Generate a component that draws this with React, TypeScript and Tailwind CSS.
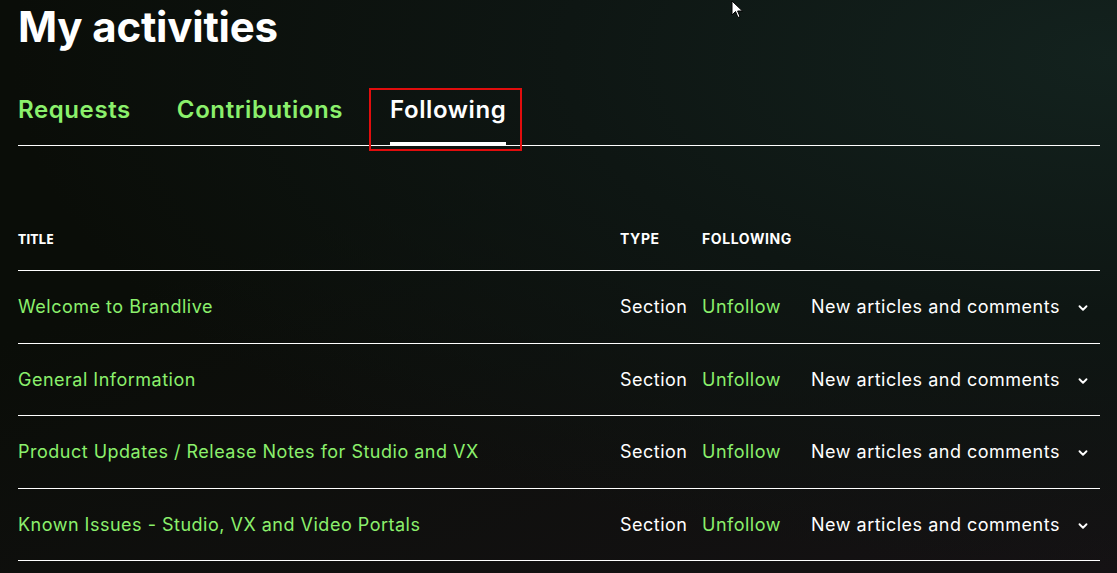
import { ChevronDown } from 'lucide-react';

interface Followed {
  title: string;
  type: string;
}

const items: Followed[] = [
  { title: 'Welcome to Brandlive', type: 'Section' },
  { title: 'General Information', type: 'Section' },
  { title: 'Product Updates / Release Notes for Studio and VX', type: 'Section' },
  { title: 'Known Issues - Studio, VX and Video Portals', type: 'Section' },
];

const tabs = ['Requests', 'Contributions', 'Following'];

export default function App() {
  return (
    <div className="relative min-h-screen w-full overflow-hidden bg-[#0b0d0a] bg-[radial-gradient(ellipse_at_100%_10%,#13221e_0%,#0e1613_35%,transparent_70%),linear-gradient(160deg,#0a0d08_35%,#151214_100%)] font-['Inter','Noto_Sans',sans-serif] text-white">
      {/* mouse pointer from the capture */}
      <svg className="absolute left-[731px] top-0 z-10" width="13" height="20" viewBox="0 0 13 20">
        <path d="M1 1 L1 15 L4.5 11.5 L7 17.5 L9 16.6 L6.6 11 L11.5 11 Z" fill="#fff" stroke="#000" strokeWidth="1" />
      </svg>

      <div className="pl-[18px] pr-[17px]">
        <h1 className="pt-[3px] text-[42px] font-bold leading-[48px] tracking-[-0.2px]">My activities</h1>

        {/* TABS */}
        <div className="mt-[44px] flex gap-[46px] border-b border-white">
          {tabs.map((t) => {
            const active = t === 'Following';
            return (
              <div key={t} className={active ? 'relative -mt-[7px] -mb-[6px] -ml-[20px] -mr-[16px] border-2 border-[#e10d0d] pl-[19px] pr-[14px] pt-[5px] pb-[3px]' : ''}>
                <div
                  className={`text-[24px] font-semibold leading-[30px] tracking-[0.6px] ${
                    active ? 'border-b-[3px] border-white pb-[17px] text-white' : 'pb-[20px] text-[#8bf06c]'
                  }`}
                >
                  {t}
                </div>
              </div>
            );
          })}
        </div>

        {/* TABLE */}
        <div className="mt-[61px]">
          <div className="grid h-[64px] grid-cols-[602px_82px_109px_1fr] items-center border-b border-white text-[14px] font-bold uppercase tracking-[0.6px]">
            <span className="font-['Open_Sans',sans-serif] tracking-[-0.2px]">Title</span>
            <span>Type</span>
            <span>Following</span>
            <span />
          </div>
          {items.map((it) => (
            <div
              key={it.title}
              className="grid h-[72.5px] grid-cols-[602px_82px_109px_1fr] items-center border-b border-white text-[18px] tracking-[0.5px]"
            >
              <span className="text-[#8bf06c]">{it.title}</span>
              <span>{it.type}</span>
              <span className="text-[#8bf06c]">Unfollow</span>
              <div className="flex items-center gap-[16px]">
                <span>New articles and comments</span>
                <ChevronDown size={14} strokeWidth={3.2} className="mt-[3px]" />
              </div>
            </div>
          ))}
        </div>
      </div>
    </div>
  );
}
